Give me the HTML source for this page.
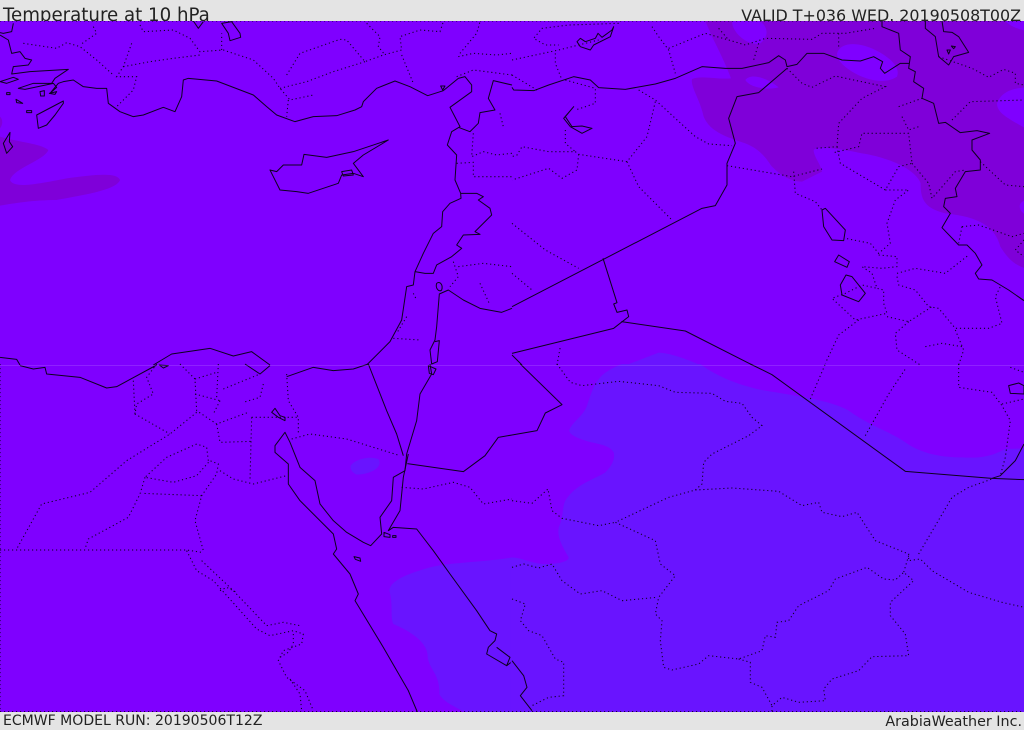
<!DOCTYPE html>
<html><head><meta charset="utf-8"><style>
html,body{margin:0;padding:0;width:1024px;height:729px;overflow:hidden;background:#e4e4e4}
.t{position:absolute;font-family:"DejaVu Sans",sans-serif;color:#222;white-space:nowrap;line-height:1}
svg{position:absolute;left:0;top:21px}
.s polyline,.s path{fill:none;stroke:#0d001f;stroke-width:3;stroke-linejoin:round}
.d polyline{fill:none;stroke:#0d001f;stroke-width:3.2;stroke-dasharray:3.5 8.5}
</style></head><body>
<div class="t" style="left:3px;top:7px;font-size:18.2px">Temperature at 10 hPa</div>
<div class="t" style="right:3px;top:8px;font-size:15.9px">VALID T+036 WED. 20190508T00Z</div>
<div class="t" style="left:3px;top:714px;font-size:14.04px">ECMWF MODEL RUN: 20190506T12Z</div>
<div class="t" style="right:2px;top:715px;font-size:14.3px">ArabiaWeather Inc.</div>
<svg width="1024" height="691" viewBox="0 21 1024 691">
<rect x="0" y="21" width="1024" height="691" fill="#7f00ff"/>
<!-- Q1 -->
<g transform="translate(0,0) scale(.33333)">
<path fill="#7f00d9" d="M0,410C60,428 120,430 145,450C135,480 40,505 30,540C40,565 100,555 200,535C280,525 350,515 360,540C350,570 250,585 170,600C100,600 40,610 0,617Z"/>
<path fill="#7f00d9" d="M0,350C10,360 8,375 0,385Z"/>
<g class="s">
<polyline points="40,70 35,95 10,100 0,98"/>
<polyline points="0,105 25,120 35,160 60,155 75,175 95,180 85,195 40,200 35,222 90,215 205,208 165,235 155,250 100,250 55,265 75,268 160,250 170,262 150,280 175,250 190,245 220,240 250,260 290,265 320,265 325,310 360,335 400,350 430,345 490,322 525,335 545,290 550,240 565,235 650,243 760,285 800,320 830,345 885,365 940,350 1010,347 1065,330 1085,320 1090,305 1130,265 1185,243 1230,260 1283,287 1330,272 1375,235 1395,230 1415,255 1415,275 1350,322 1380,380 1355,395 1342,435 1370,465 1365,540 1382,580 1383,595 1350,610 1328,635 1325,680 1300,700 1270,760 1245,815 1240,855 1220,860 1205,960 1170,1025 1100,1095"/>
<polyline points="1536,255 1480,242 1465,295 1485,330 1440,338 1435,370 1410,395 1375,382"/>
<polyline points="1382,580 1430,580 1450,590 1435,600 1470,625 1475,645 1425,695 1440,703 1390,705 1370,735 1385,745 1355,770 1310,795 1300,820 1275,820 1245,815"/>
<polyline points="1536,925 1505,937 1440,925 1390,900 1345,870 1318,882 1310,980 1305,1020 1290,1050 1295,1092 1312,1085 1318,1022 1305,1025"/>
<path d="M1310,850C1320,842 1330,855 1325,870 1318,878 1305,865 1310,850Z"/>
<path d="M190,303 110,345 115,385 140,375 165,345 190,310Z"/>
<path d="M30,397 10,430 20,460 38,440 28,425Z"/>
<path d="M810,510 830,515 850,495 905,495 912,463 980,472 1060,455 1165,420 1090,465 1060,490 1090,530 1060,520 1025,525 1015,550 925,580 890,575 840,570 820,530Z"/>
<path d="M665,70 695,65 720,100 722,112 690,122 685,100Z"/>
<polyline points="580,63 595,85 610,65"/>
<path d="M1025,515 1055,510 1060,525 1030,528Z"/>
<path d="M1322,258 1335,258 1328,270Z"/>
<path d="M0,245 40,232 55,238 20,250Z"/>
<path d="M120,275 133,272 133,288 122,288Z"/>
<path d="M148,280 170,275 165,283Z"/>
<path d="M20,278 30,278 30,284 20,284Z"/>
<path d="M48,298 60,305 68,310 50,308Z"/>
<path d="M80,332 95,332 95,338 80,338Z"/>
<polyline points="0,1072 50,1078 60,1095"/>
<polyline points="460,1095 515,1062 630,1045 700,1068 755,1055 810,1095"/>
</g>
<g class="d">
<polyline points="0,63 1536,63"/>
<polyline points="70,130 170,145 200,128 240,140 290,180 340,225"/>
<polyline points="280,80 290,100 240,135"/>
<polyline points="420,75 430,95 520,90 570,115 600,155 670,150 760,180 820,235 840,265 870,300 940,285"/>
<polyline points="665,150 665,100"/>
<polyline points="395,130 370,200 350,230 410,230 400,270 350,320"/>
<polyline points="370,200 450,185 520,175 600,165"/>
<polyline points="860,225 900,160 1020,118 1040,120 1095,185 1150,165 1205,150 1200,110 1260,90 1320,95 1330,65"/>
<polyline points="1095,185 1000,215 920,245 840,265"/>
<polyline points="1205,165 1240,250"/>
<polyline points="865,300 860,350"/>
<polyline points="1100,70 1140,110 1135,140 1155,165"/>
<polyline points="1380,160 1430,100 1440,65"/>
<polyline points="1375,170 1420,160 1490,165 1536,160"/>
<polyline points="1370,230 1420,210 1536,225"/>
<polyline points="1420,400 1415,470 1450,455 1490,465 1536,460"/>
<polyline points="1370,490 1420,487 1420,530 1536,530"/>
<polyline points="1500,340 1510,380"/>
<polyline points="1360,785 1375,830 1350,860"/>
<polyline points="1375,800 1450,790 1536,800"/>
<polyline points="1440,850 1470,915"/>
<polyline points="1180,1015 1260,1020"/>
<polyline points="1240,880 1250,900"/>
<polyline points="1220,950 1190,1000"/>
</g>
</g>
<!-- Q2 -->
<g transform="translate(512,0) scale(.33333)">
<path fill="#7f00d9" d="M580,63L600,110C620,150 640,190 657,235C620,240 570,225 540,237C535,260 565,300 575,350C590,385 620,405 700,430C750,450 765,480 780,500C810,530 840,545 870,545L930,515C925,490 905,470 905,450C915,440 950,440 1050,460C1120,470 1210,505 1226,550C1225,600 1240,625 1300,640C1400,650 1450,680 1465,740C1490,780 1510,795 1540,805L1540,385C1490,355 1455,340 1455,310C1470,270 1510,265 1540,262L1540,63Z"/>
<path fill="#7f00ff" d="M660,63L745,63C770,85 770,110 745,130C710,140 660,100 660,63Z"/>
<path fill="#7f00ff" d="M975,160C985,125 1040,125 1090,150C1140,175 1165,205 1155,230C1120,255 1060,240 1020,215C990,195 975,180 975,160Z"/>
<path fill="#7f00ff" d="M700,240C715,220 760,230 800,262C770,270 715,265 700,240Z"/>
<path fill="#7f00ff" d="M1480,63L1540,63L1540,92C1510,85 1490,75 1480,63Z"/>
<path fill="#7f00ff" d="M1540,600C1515,610 1520,630 1540,645Z"/>
<path fill="#6914ff" d="M330,1100L440,1058C480,1060 530,1080 575,1100Z"/>
<g class="s">
<polyline points="0,262 5,270 65,272 110,255 185,230 235,240 260,263 340,268 430,252 490,235 570,200 640,205 690,205 770,188 800,167 820,180 825,200 855,193 885,160 935,160 990,180 1045,183 1085,170 1112,185 1105,205 1118,220 1165,190 1192,190"/>
<polyline points="1110,63 1110,80 1160,100 1165,150 1195,170 1190,205 1210,215 1205,245 1235,265 1230,295 1265,310 1280,370 1300,367 1345,398 1395,392 1433,400 1380,420 1380,450 1405,480 1405,510 1360,515 1330,565 1335,590 1300,595 1295,620 1315,640 1290,683 1340,735 1365,735 1390,760 1410,795 1390,820 1400,837 1440,840 1490,870 1536,902"/>
<polyline points="0,920 570,625 610,617 645,555 645,490 670,430 650,355 675,290 740,278 825,205"/>
<polyline points="0,1060 305,985 350,950 345,930 315,937 305,912 315,908 273,775"/>
<polyline points="328,965 520,993 725,1097"/>
<polyline points="0,1065 30,1095"/>
<polyline points="1240,63 1240,85 1270,110 1280,170 1310,195 1325,170 1370,157 1340,110 1320,97 1295,95 1290,63"/>
<path d="M1305,150 1315,150 1310,162Z"/>
<path d="M1318,138 1330,140 1325,146Z"/>
<path d="M195,125 205,115 220,125 250,115 258,100 270,112 300,90 305,80 295,110 245,135 235,150 205,140Z"/>
<path d="M185,320 160,350 180,380 210,378 240,385 210,400 175,380 155,355Z"/>
<path d="M930,630 940,625 1000,690 995,722 960,720 935,680Z"/>
<path d="M980,765 1012,785 1005,802 968,785Z"/>
<path d="M1002,825 985,855 990,885 1040,905 1060,880 1020,830Z"/>
</g>
<g class="d">
<polyline points="0,63 1536,63"/>
<polyline points="320,70 170,75 90,85 65,115 100,135 140,135"/>
<polyline points="130,160 130,190 150,240"/>
<polyline points="0,180 140,150 260,120"/>
<polyline points="420,80 440,110 470,150 490,220"/>
<polyline points="470,145 580,100 650,120 700,135 760,115 900,118 930,100 1000,100 1090,85"/>
<polyline points="620,85 650,120"/>
<polyline points="980,100 980,140"/>
<polyline points="740,130 725,180"/>
<polyline points="0,225 75,270"/>
<polyline points="160,240 250,265 250,310 190,330"/>
<polyline points="380,270 430,300 550,410 590,432 660,437"/>
<polyline points="430,305 405,410 345,485 200,463 190,455 110,455 30,440 15,465 0,470"/>
<polyline points="200,463 195,510 150,535 110,505 0,540"/>
<polyline points="160,390 160,430 190,455"/>
<polyline points="345,485 380,560 480,660"/>
<polyline points="645,497 840,530 930,507"/>
<polyline points="845,515 850,580 910,605 930,630"/>
<polyline points="825,205 870,250 900,262 970,228 1025,240 1120,260 1050,295 980,370 975,440 910,445"/>
<polyline points="975,440 985,490 1120,570 1160,500 1200,490 1190,400 1050,400 1040,440 965,458"/>
<polyline points="1160,320 1230,295"/>
<polyline points="1170,350 1190,390 1220,380"/>
<polyline points="1120,570 1190,570 1150,600 1125,670 1135,730 1100,760 1075,730 1000,715"/>
<polyline points="1100,765 1155,770 1155,800 1110,805 1050,800 1080,820 1095,865 1115,870 1115,910 1125,940 1030,960 960,895 1000,880 1050,855 1095,865"/>
<polyline points="1155,820 1210,805 1300,820 1370,765"/>
<polyline points="1155,830 1160,855 1210,870 1250,920 1280,925 1330,985 1430,985 1470,970 1450,890 1465,860"/>
<polyline points="1125,950 1190,965 1260,920"/>
<polyline points="1190,965 1150,1000 1155,1050 1225,1095"/>
<polyline points="1330,990 1355,1050 1340,1095"/>
<polyline points="1240,1040 1290,1030 1350,1040"/>
<polyline points="1040,960 980,1005 940,1090"/>
<polyline points="1200,490 1250,550 1260,595 1330,515 1360,510"/>
<polyline points="1405,485 1480,555 1536,560"/>
<polyline points="1350,680 1400,675 1500,710 1536,700"/>
<polyline points="1350,680 1340,730"/>
<polyline points="1536,720 1510,750 1536,770"/>
<polyline points="1320,360 1375,305 1536,300"/>
<polyline points="1280,170 1380,205 1430,232 1475,208 1510,220 1510,250 1536,255"/>
<polyline points="0,670 100,750 200,805"/>
<polyline points="0,820 60,870"/>
<polyline points="135,1095 145,1040"/>
</g>
</g>
<!-- Q3 -->
<g transform="translate(0,364) scale(.33333)">
<path fill="#6914ff" d="M1540,580C1450,595 1350,595 1290,610C1220,630 1170,650 1168,680C1180,720 1170,760 1180,780C1240,805 1285,840 1283,880C1290,920 1320,930 1318,990C1330,1015 1370,1030 1395,1045L1540,1045Z"/>
<path fill="#6914ff" d="M1052,305C1065,285 1110,275 1135,285C1150,305 1120,330 1070,332C1055,325 1050,315 1052,305Z"/>
<g class="s">
<polyline points="60,5 100,15 135,10 140,30 240,40 320,72 350,68 470,3"/>
<polyline points="735,0 780,30 810,5"/>
<polyline points="860,38 940,10 1000,20 1060,15 1105,0"/>
<polyline points="1105,0 1160,140 1190,210 1210,275"/>
<polyline points="1290,0 1295,30 1260,90 1250,170 1220,270 1215,320 1180,340 1175,410 1140,460 1145,510 1112,545 1090,535 1040,505 1000,470 960,420 945,350 900,310 870,235 855,205 825,245 825,265 865,300 865,360 900,410 1000,510 1010,555 1000,570 1050,630 1075,690 1065,710 1150,850 1225,980 1252,1044"/>
<polyline points="1225,270 1210,340 1200,440 1165,500 1180,490 1250,495 1300,560 1350,630 1430,740 1470,800 1490,810 1485,830 1465,850 1460,870 1520,905 1530,880 1490,850"/>
<polyline points="1520,905 1540,890"/>
<polyline points="1222,299 1390,323 1455,275 1495,220 1536,213"/>
<path d="M815,145 825,133 840,155 855,160 855,170 835,160Z"/>
<path d="M1062,578 1080,582 1082,592 1066,586Z"/>
<path d="M1152,505 1170,512 1170,520 1152,518Z"/>
<path d="M1178,515 1188,515 1188,520 1178,520Z"/>
<path d="M1285,5 1308,15 1300,32 1288,28Z"/>
<path d="M478,3 505,5 490,12Z"/>
</g>
<g class="d">
<polyline points="0,0 0,1044"/>
<polyline points="0,1043 1536,1043"/>
<polyline points="470,0 440,40 460,90 410,120 405,150 510,210"/>
<polyline points="400,50 405,150"/>
<polyline points="540,0 585,45 590,140 650,180 745,145"/>
<polyline points="585,45 650,25"/>
<polyline points="585,90 660,110"/>
<polyline points="655,0 650,100"/>
<polyline points="670,75 780,30"/>
<polyline points="790,60 780,100 730,115"/>
<polyline points="660,110 640,150"/>
<polyline points="590,145 510,210 380,290 270,385 125,420 50,555"/>
<polyline points="650,180 660,235 755,232"/>
<polyline points="755,160 750,350"/>
<polyline points="755,160 890,160"/>
<polyline points="860,30 865,110 895,160 895,210"/>
<polyline points="660,320 700,345 760,360 860,335"/>
<polyline points="875,225 930,210 1040,225 1200,275"/>
<polyline points="625,290 620,250 590,240 500,280 435,340 520,355 590,335 630,290 655,300 650,330 605,395 585,470 610,560"/>
<polyline points="605,395 425,388"/>
<polyline points="435,340 420,390 385,460 265,525 255,555"/>
<polyline points="0,558 560,558 605,565"/>
<polyline points="560,560 590,620 640,650 770,795 810,815 880,800 910,810 905,840 850,860 835,890 860,940 915,980 940,1040"/>
<polyline points="605,590 700,680 800,785 850,775 900,785"/>
<polyline points="880,810 880,840 865,865 840,880"/>
<polyline points="660,680 680,670 710,685"/>
<polyline points="870,945 900,990 905,1040"/>
<polyline points="1205,370 1270,375 1360,355 1410,370 1450,420 1536,405"/>
</g>
</g>
<!-- Q4 -->
<g transform="translate(512,364) scale(.33333)">
<path fill="#6914ff" d="M-4,580C30,580 60,600 100,600C130,600 170,595 170,580C150,545 135,520 140,490C155,460 150,430 160,410C190,360 250,345 280,325C300,305 310,285 305,265C290,240 250,240 220,230C190,220 170,210 172,197C185,170 215,155 225,125C240,80 250,50 275,30C290,18 310,8 330,0L565,0C610,35 680,65 760,80C850,95 960,110 1010,140C1080,190 1140,205 1180,235C1230,270 1290,280 1350,280C1420,285 1450,270 1480,255L1540,253L1540,1045L-4,1045Z"/>
<g class="s">
<polyline points="25,0 150,122 100,147 75,200 0,213"/>
<polyline points="715,0 780,32 1180,322 1440,343 1536,347"/>
<polyline points="1536,240 1510,290 1465,335 1440,343"/>
<polyline points="0,890 35,935 45,970 25,995 60,1040"/>
<path d="M1490,65 1520,57 1536,65 1536,90 1495,88Z"/>
</g>
<g class="d">
<polyline points="0,1043 1536,1043"/>
<polyline points="135,0 175,55 210,65 320,52 440,65 490,85 600,88 640,112 690,118 720,160 750,185 710,215 600,270 575,295 570,360 550,378 470,400 310,475 430,530 445,600 490,635 440,700 430,750 450,770 445,830 455,910 480,918 560,900 590,875 680,885 750,860 760,815 790,820 795,775 830,770 860,725 950,680 970,645 1065,610 1115,645 1150,648 1175,625 1205,650 1135,715 1135,755 1180,810 1190,875 1080,878 1040,920 960,945 935,975 940,1010 860,1015 810,1000 780,1025 780,1044"/>
<polyline points="0,410 60,418 108,375 120,440 150,463 260,485 310,475"/>
<polyline points="550,378 660,372 800,382 870,425 920,415 930,445 990,458 1035,445 1090,530 1190,570 1190,590 1225,585 1260,620 1370,685 1470,715 1536,730"/>
<polyline points="1190,575 1175,625"/>
<polyline points="1220,570 1320,400 1370,370 1440,345"/>
<polyline points="0,610 35,600 80,612 120,600 150,650 205,690 270,680 330,710 435,700"/>
<polyline points="0,705 40,720 25,770 50,800 90,815 130,885 155,895 155,995 110,1000 60,1025"/>
<polyline points="680,885 715,895 715,955 750,970 780,1025"/>
<polyline points="895,105 940,0"/>
<polyline points="1060,215 1130,90 1180,15"/>
<polyline points="1340,0 1340,70 1440,85 1470,125 1495,170 1480,280 1465,335"/>
<polyline points="1470,120 1536,105"/>
<polyline points="1495,10 1536,25"/>
</g>
</g>
<rect x="0" y="365" width="1024" height="1" fill="#fff" opacity=".13"/>
</svg>
</body></html>
